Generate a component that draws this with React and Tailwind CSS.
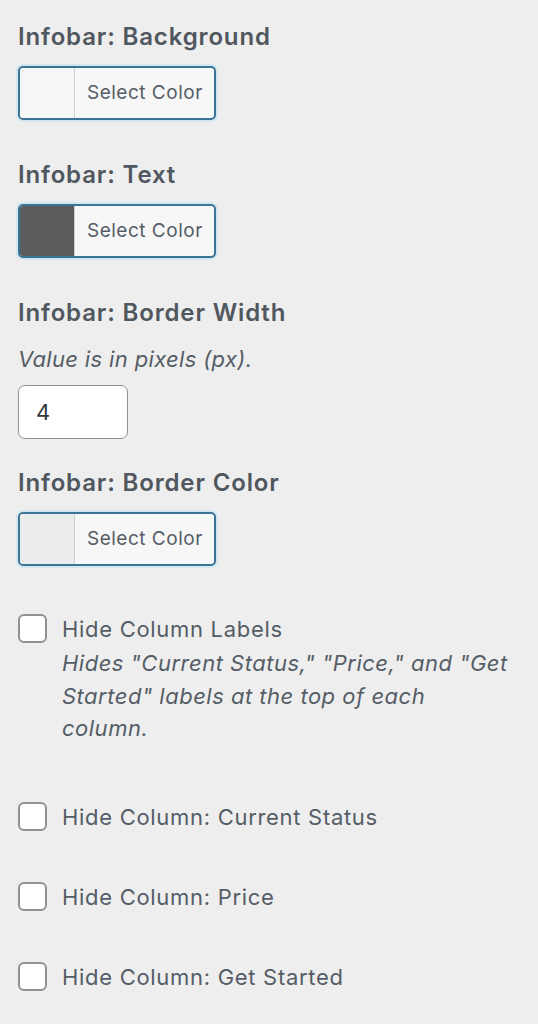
import React from "react";

const font = { fontFamily: "Inter, 'Noto Sans', 'Liberation Sans', sans-serif" };

function ColorButton({ swatch, mt }) {
  return (
    <div className={`${mt} flex h-[54px] w-[198px] overflow-hidden rounded-[5px] border-2 border-[#3a7596] bg-[#f7f7f7] shadow-[0_0_0_2px_#d6e6ef]`}>
      <div className={`w-[55px] shrink-0 border-r border-[#cfcfcf] ${swatch}`} />
      <div className="flex flex-1 items-center pl-[12px] text-[19px] tracking-[0.5px] text-[#555d66]">Select Color</div>
    </div>
  );
}

function Check({ label, mt }) {
  return (
    <div className={`${mt} flex items-center gap-[15px]`}>
      <div className="h-[29px] w-[29px] shrink-0 rounded-[6px] border-2 border-[#8e9196] bg-white" />
      <span className="text-[22px] leading-[32px] tracking-[0.7px] text-[#555d66]">{label}</span>
    </div>
  );
}

export default function App() {
  return (
    <div style={font} className="h-[1024px] w-[538px] overflow-hidden bg-[#eeeeee] px-[18px] pt-[22px] text-[#50575e]">
      <h3 className="text-[24px] font-semibold leading-[30px] tracking-[0.85px]">Infobar: Background</h3>
      <ColorButton swatch="bg-[#f6f6f6]" mt="mt-[14px]" />

      <h3 className="mt-[40px] text-[24px] font-semibold leading-[30px] tracking-[0.85px]">Infobar: Text</h3>
      <ColorButton swatch="bg-[#5c5c5c]" mt="mt-[14px]" />

      <h3 className="mt-[40px] text-[24px] font-semibold leading-[30px] tracking-[0.85px]">Infobar: Border Width</h3>
      <p className="mt-[16px] text-[22px] italic leading-[30px] tracking-[0.35px] text-[#555d66]">Value is in pixels (px).</p>
      <div className="mt-[11px] flex h-[54px] w-[110px] items-center rounded-[7px] border-[1.5px] border-[#8e9196] bg-white pl-[17px] text-[22px] text-[#32373c]">
        4
      </div>

      <h3 className="mt-[29px] text-[24px] font-semibold leading-[30px] tracking-[0.85px]">Infobar: Border Color</h3>
      <ColorButton swatch="bg-[#ececec]" mt="mt-[14px]" />

      <div className="mt-[48px] flex gap-[15px]">
        <div className="h-[29px] w-[29px] shrink-0 rounded-[6px] border-2 border-[#8e9196] bg-white" />
        <div className="-mt-[1px]">
          <div className="text-[22px] leading-[32px] tracking-[0.7px] text-[#555d66]">Hide Column Labels</div>
          <p className="mt-[2px] w-[452px] text-[22px] italic leading-[32.5px] tracking-[0.5px] text-[#555d66]">
            Hides "Current Status," "Price," and "Get Started" labels at the top of each column.
          </p>
        </div>
      </div>

      <Check label="Hide Column: Current Status" mt="mt-[56px]" />
      <Check label="Hide Column: Price" mt="mt-[48px]" />
      <Check label="Hide Column: Get Started" mt="mt-[48px]" />
    </div>
  );
}
